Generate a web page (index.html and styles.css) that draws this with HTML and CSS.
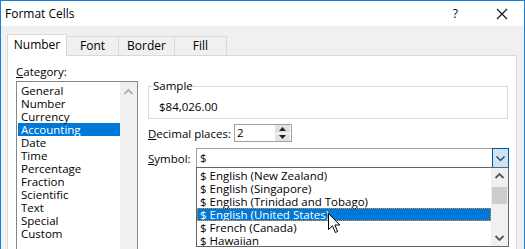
FILE: index.html
```html
<!DOCTYPE html>
<html>

<head>
    <title>Format Cells</title>
    <link rel="stylesheet" href="styles.css">
</head>

<body>
    <div class="window">
        <div class="titlebar">
            <span class="title">Format Cells</span>
            <span class="help">?</span>
            <svg class="close" width="12" height="12" viewBox="0 0 12 12">
                <path d="M1 1 L11 11 M11 1 L1 11" stroke="#111" stroke-width="1.1" fill="none" />
            </svg>
        </div>

        <div class="dialog">
            <div class="tabs">
                <div class="tab active">Number</div>
                <div class="tab">Font</div>
                <div class="tab">Border</div>
                <div class="tab">Fill</div>
            </div>

            <div class="panel">
                <div class="left">
                    <div class="label"><u>C</u>ategory:</div>
                    <div class="listbox">
                        <div class="items">
                            <div class="item">General</div>
                            <div class="item">Number</div>
                            <div class="item">Currency</div>
                            <div class="item selected">Accounting</div>
                            <div class="item">Date</div>
                            <div class="item">Time</div>
                            <div class="item">Percentage</div>
                            <div class="item">Fraction</div>
                            <div class="item">Scientific</div>
                            <div class="item">Text</div>
                            <div class="item">Special</div>
                            <div class="item">Custom</div>
                        </div>
                        <div class="scrollbar">
                            <svg class="arrow" width="17" height="17" viewBox="0 0 17 17">
                                <path d="M4.5 10 L8.5 6 L12.5 10" stroke="#a6a6a6" stroke-width="1.6" fill="none" />
                            </svg>
                        </div>
                    </div>
                </div>

                <div class="right">
                    <fieldset class="sample">
                        <legend>Sample</legend>
                        <div class="sample-value">$84,026.00</div>
                    </fieldset>

                    <div class="row decimal-row">
                        <span class="row-label"><u>D</u>ecimal places:</span>
                        <div class="spinbox">
                            <span class="spin-value">2</span>
                            <div class="spin-buttons">
                                <div class="spin-btn">
                                    <svg width="7" height="4" viewBox="0 0 7 4"><path d="M0 4 L3.5 0 L7 4 Z" fill="#222" /></svg>
                                </div>
                                <div class="spin-btn">
                                    <svg width="7" height="4" viewBox="0 0 7 4"><path d="M0 0 L3.5 4 L7 0 Z" fill="#222" /></svg>
                                </div>
                            </div>
                        </div>
                    </div>

                    <div class="row symbol-row">
                        <span class="row-label"><u>S</u>ymbol:</span>
                        <div class="combo-wrap">
                            <div class="combo">
                                <span class="combo-value">$</span>
                                <div class="combo-btn">
                                    <svg width="15" height="18" viewBox="0 0 15 18">
                                        <path d="M3.5 7.5 L7.5 11.5 L11.5 7.5" stroke="#333" stroke-width="1.2" fill="none" />
                                    </svg>
                                </div>
                            </div>
                            <div class="dropdown">
                                <div class="drop-items">
                                    <div class="drop-item">$ English (New Zealand)</div>
                                    <div class="drop-item">$ English (Singapore)</div>
                                    <div class="drop-item">$ English (Trinidad and Tobago)</div>
                                    <div class="drop-item selected">$ English (United States)</div>
                                    <div class="drop-item">$ French (Canada)</div>
                                    <div class="drop-item">$ Hawaiian</div>
                                </div>
                                <div class="drop-scroll">
                                    <svg width="17" height="17" viewBox="0 0 17 17">
                                        <path d="M4.5 10 L8.5 6 L12.5 10" stroke="#555" stroke-width="1.8" fill="none" />
                                    </svg>
                                    <div class="thumb"></div>
                                    <svg class="down" width="17" height="17" viewBox="0 0 17 17">
                                        <path d="M4.5 7 L8.5 11 L12.5 7" stroke="#555" stroke-width="1.8" fill="none" />
                                    </svg>
                                </div>
                            </div>
                        </div>
                    </div>
                </div>
            </div>
        </div>

        <!-- mouse pointer over the list -->
        <svg class="cursor" width="13" height="21" viewBox="0 0 13 21">
            <path d="M0.5 0.5 L0.5 16.5 L4.5 12.8 L7.3 19.5 L9.6 18.5 L6.9 12 L11.8 12 Z" fill="#fff" stroke="#000" stroke-width="1" stroke-linejoin="round" />
        </svg>
    </div>
</body>

</html>
```

FILE: styles.css
```css
body {
    margin: 0;
    padding: 0;
    font-family: "Open Sans", "Noto Sans", sans-serif;
    font-size: 11.5px;
    color: #000;
}

.window {
    position: relative;
    width: 525px;
    height: 249px;
    box-sizing: border-box;
    border: 1px solid #1b7fd6;
    border-bottom: none;
    overflow: hidden;
    background: #f0f0f0;
}

.titlebar {
    height: 25px;
    background: #fff;
    display: flex;
    align-items: center;
    padding-left: 4px;
    font-size: 12px;
}

.title {
    flex: 1;
}

.help {
    margin-right: 38px;
}

.close {
    margin-right: 16px;
}

.dialog {
    padding: 8px 7px 0 6px;
}

.tabs {
    display: flex;
    align-items: flex-end;
    height: 21px;
    font-size: 12px;
}

.tab {
    min-width: 52px;
    height: 19px;
    line-height: 18px;
    box-sizing: border-box;
    border: 1px solid #d9d9d9;
    border-bottom: none;
    border-left: none;
    background: #f0f0f0;
    padding: 0 8px;
    text-align: center;
}

.tab.active {
    width: 60px;
    height: 22px;
    line-height: 20px;
    background: #fff;
    border-left: 1px solid #d9d9d9;
    padding: 0;
    margin-bottom: -1px;
    position: relative;
}

.panel {
    background: #fff;
    border: 1px solid #d9d9d9;
    height: 200px;
    display: flex;
    gap: 10px;
    padding: 9px 0 0 8px;
}

.label {
    height: 16px;
    line-height: 14px;
}

.listbox {
    width: 122px;
    height: 180px;
    box-sizing: border-box;
    border: 1px solid #828790;
    display: flex;
}

.items {
    flex: 1;
    padding: 2px 0 0 1px;
}

.item {
    height: 13px;
    line-height: 13px;
    padding-left: 3px;
}

.item.selected {
    background: #0078d7;
    color: #fff;
}

.scrollbar {
    width: 17px;
    background: #f0f0f0;
}

.arrow {
    display: block;
    margin-top: 2px;
}

.right {
    width: 360px;
    display: flex;
    flex-direction: column;
}

.sample {
    margin: 14px 0 0 0;
    padding: 0 0 0 10px;
    height: 40px;
    box-sizing: border-box;
    border: 1px solid #dcdcdc;
}

.sample legend {
    padding: 0;
    margin-left: -6px;
    line-height: 14px;
}

.sample-value {
    line-height: 14px;
    margin-top: 7px;
}

.row {
    display: flex;
    align-items: center;
}

.row-label {
    white-space: nowrap;
    flex-shrink: 0;
}

.decimal-row {
    margin-top: 5px;
}

.decimal-row .row-label {
    width: 86px;
}

.spinbox {
    width: 58px;
    height: 18px;
    box-sizing: border-box;
    border: 1px solid #a0a0a0;
    display: flex;
    background: #fff;
}

.spin-value {
    flex: 1;
    line-height: 16px;
    padding-left: 2px;
}

.spin-buttons {
    width: 15px;
    display: flex;
    flex-direction: column;
    gap: 1px;
    padding: 0 1px 0 0;
}

.spin-btn {
    flex: 1;
    background: #e1e1e1;
    display: flex;
    align-items: center;
    justify-content: center;
}

.symbol-row {
    margin-top: 6px;
}

.symbol-row .row-label {
    width: 48px;
}

.combo-wrap {
    position: relative;
}

.combo {
    width: 313px;
    height: 20px;
    box-sizing: border-box;
    border: 1px solid #a0a0a0;
    border-bottom-color: #646464;
    display: flex;
    background: #fff;
}

.combo-value {
    flex: 1;
    line-height: 18px;
    padding-left: 3px;
}

.combo-btn {
    width: 17px;
    box-sizing: border-box;
    border: 1px solid #005499;
    background: #cce4f7;
    margin: -1px -1px 0 0;
    height: 20px;
}

.combo-btn svg {
    display: block;
}

.dropdown {
    position: absolute;
    left: 0;
    top: 19px;
    width: 313px;
    height: 80px;
    box-sizing: border-box;
    border: 1px solid #646464;
    background: #fff;
    display: flex;
}

.drop-items {
    flex: 1;
    padding-top: 1px;
}

.drop-item {
    height: 13px;
    line-height: 13px;
    padding-left: 3px;
    white-space: nowrap;
}

.drop-item.selected {
    background: #0078d7;
    color: #fff;
    outline: 1px dotted #f08a24;
    outline-offset: -1px;
}

.drop-scroll {
    width: 17px;
    background: #f0f0f0;
    display: flex;
    flex-direction: column;
    align-items: center;
}

.drop-scroll svg {
    display: block;
}

.thumb {
    width: 15px;
    height: 17px;
    background: #cdcdcd;
    margin-top: 2px;
}

.drop-scroll .down {
    margin-top: auto;
}

.cursor {
    position: absolute;
    left: 327px;
    top: 212px;
}
```
